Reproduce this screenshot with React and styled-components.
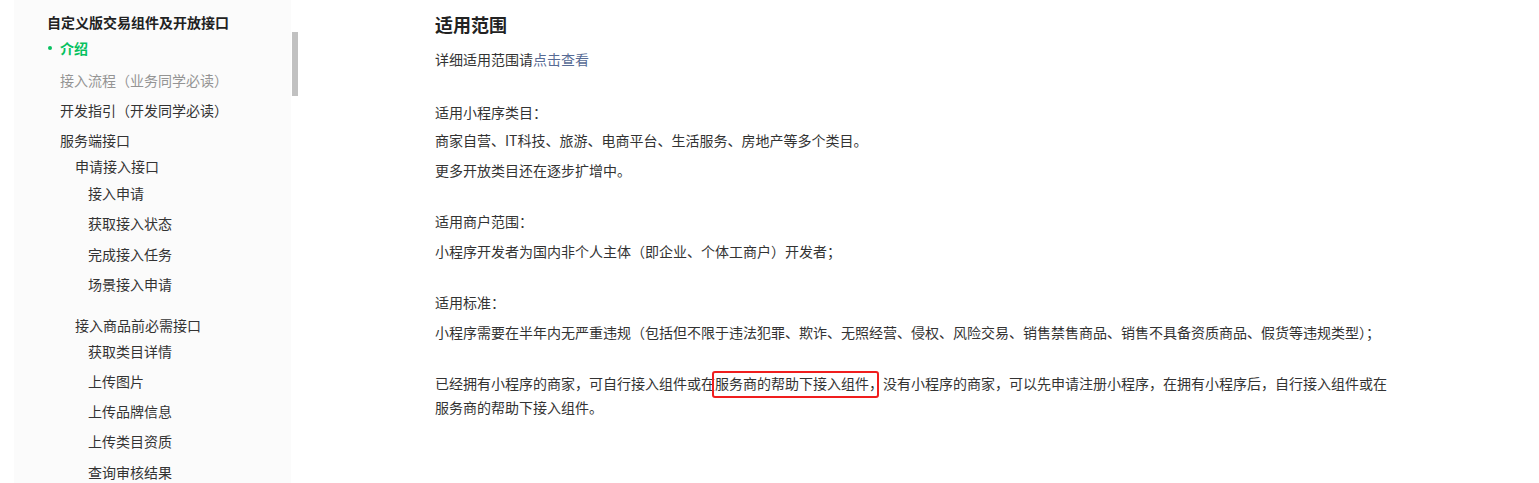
import React from "react";
import styled, { createGlobalStyle } from "styled-components";

const Global = createGlobalStyle`
  html, body { margin: 0; padding: 0; background: #fff; }
  body {
    font-family: "Noto Sans CJK SC", "Noto Sans", "Liberation Sans", sans-serif;
    color: #333;
    font-size: 14px;
  }
  * { box-sizing: border-box; }
`;

const Page = styled.div`
  display: flex;
  align-items: flex-start;
  width: 1539px;
  height: 483px;
  overflow: hidden;
`;

const Sidebar = styled.nav`
  position: relative;
  margin-left: 14px;
  width: 277px;
  height: 483px;
  background: #fbfbfb;
  padding: 11px 0 0 33px;
  flex-shrink: 0;
`;

const ScrollThumb = styled.div`
  position: absolute;
  left: 278px;
  top: 32px;
  width: 6px;
  height: 64px;
  background: #c1c1c1;
`;

const NavTitle = styled.div`
  font-size: 14px;
  font-weight: 700;
  line-height: 22px;
  color: #222;
  white-space: nowrap;
`;

const NavItem = styled.div`
  font-size: 14px;
  line-height: ${(p) => (p.$level === 2 ? "22px" : "30px")};
  padding-left: ${(p) => (p.$level === 1 ? 13 : p.$level === 2 ? 28 : 41)}px;
  margin-top: ${(p) => p.$mt || 0}px;
  color: ${(p) => (p.$active ? "#07c160" : p.$muted ? "#949494" : "#333")};
  font-weight: ${(p) => (p.$active ? 700 : 400)};
  white-space: nowrap;
  position: relative;
`;

const Bullet = styled.span`
  position: absolute;
  left: 1px;
  top: 13px;
  width: 4px;
  height: 4px;
  border-radius: 50%;
  background: #07c160;
`;

const Main = styled.main`
  margin-left: 144px;
  width: 960px;
  padding-top: 9px;
`;

const Heading = styled.h2`
  margin: 0;
  font-size: 18px;
  font-weight: 700;
  line-height: 30px;
  color: #222;
`;

const Para = styled.p`
  margin: ${(p) => p.$mt || 0}px 0 0;
  font-size: 14px;
  line-height: 24px;
  color: #333;
`;

const Link = styled.a`
  color: #576b95;
  text-decoration: none;
`;

const Marked = styled.span`
  position: relative;
  &::after {
    content: "";
    position: absolute;
    left: -3px;
    right: 4px;
    top: -2px;
    bottom: -5px;
    border: 2px solid #f01e1e;
    border-radius: 3px;
    pointer-events: none;
  }
`;

const nav = [
  { t: "接入流程（业务同学必读）", level: 1, muted: true, mt: 2 },
  { t: "开发指引（开发同学必读）", level: 1 },
  { t: "服务端接口", level: 1 },
  { t: "申请接入接口", level: 2 },
  { t: "接入申请", level: 3, mt: 1 },
  { t: "获取接入状态", level: 3 },
  { t: "完成接入任务", level: 3, mt: 1 },
  { t: "场景接入申请", level: 3 },
  { t: "接入商品前必需接口", level: 2, mt: 15 },
  { t: "获取类目详情", level: 3 },
  { t: "上传图片", level: 3 },
  { t: "上传品牌信息", level: 3 },
  { t: "上传类目资质", level: 3 },
  { t: "查询审核结果", level: 3, mt: 1 },
];

export default function App() {
  return (
    <>
      <Global />
      <Page>
        <Sidebar>
          <ScrollThumb />
          <NavTitle>自定义版交易组件及开放接口</NavTitle>
          <NavItem $level={1} $active>
            <Bullet />介绍
          </NavItem>
          {nav.map((n) => (
            <NavItem key={n.t} $level={n.level} $muted={n.muted} $mt={n.mt}>
              {n.t}
            </NavItem>
          ))}
        </Sidebar>
        <Main>
          <Heading>适用范围</Heading>
          <Para $mt={8}>
            详细适用范围请<Link href="#">点击查看</Link>
          </Para>
          <Para $mt={29}>适用小程序类目：</Para>
          <Para $mt={4}>商家自营、IT科技、旅游、电商平台、生活服务、房地产等多个类目。</Para>
          <Para $mt={6}>更多开放类目还在逐步扩增中。</Para>
          <Para $mt={27}>适用商户范围：</Para>
          <Para $mt={6}>小程序开发者为国内非个人主体（即企业、个体工商户）开发者；</Para>
          <Para $mt={27}>适用标准：</Para>
          <Para $mt={6}>
            小程序需要在半年内无严重违规（包括但不限于违法犯罪、欺诈、无照经营、侵权、风险交易、销售禁售商品、销售不具备资质商品、假货等违规类型）；
          </Para>
          <Para $mt={27}>
            已经拥有小程序的商家，可自行接入组件或在<Marked>服务商的帮助下接入组件，</Marked>没有小程序的商家，可以先申请注册小程序，在拥有小程序后，自行接入组件或在服务商的帮助下接入组件。
          </Para>
        </Main>
      </Page>
    </>
  );
}
